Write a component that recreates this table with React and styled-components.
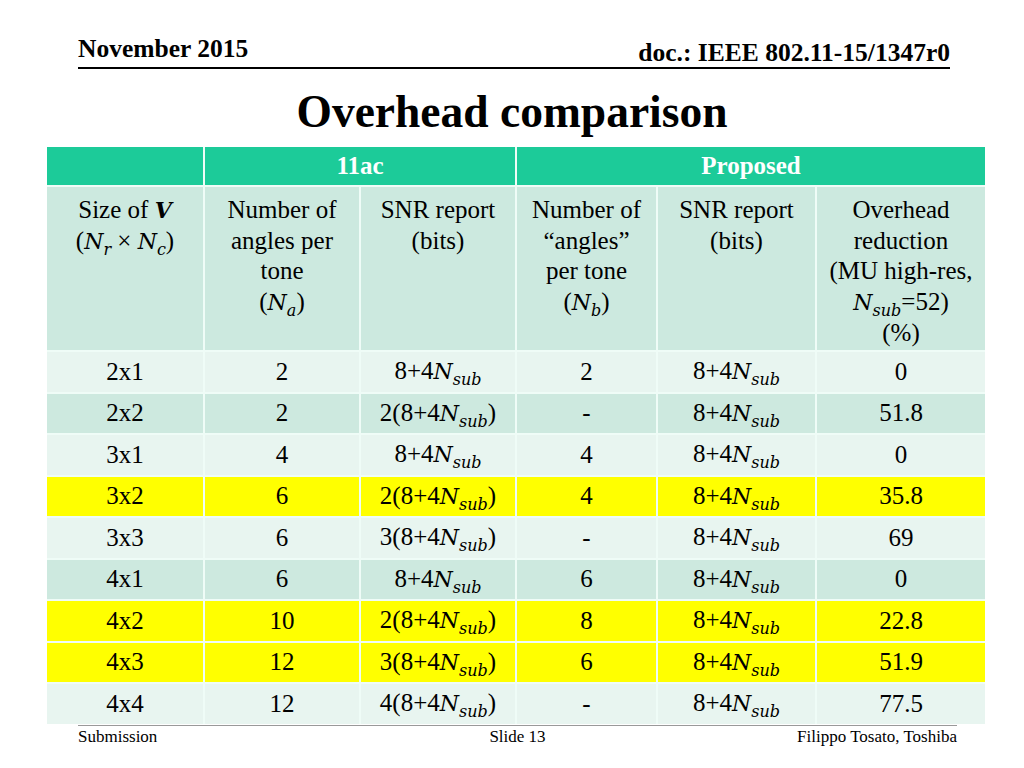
import React from 'react';
import styled, { createGlobalStyle } from 'styled-components';

const serif = `"Liberation Serif", "Times New Roman", serif`;

const GlobalStyle = createGlobalStyle`
  html, body {
    margin: 0;
    padding: 0;
    background: #fff;
  }
  body {
    font-family: ${serif};
    color: #000;
  }
`;

const Slide = styled.div`
  width: 1024px;
  height: 768px;
  display: flex;
  flex-direction: column;
  overflow: hidden;
`;

const TopBar = styled.div`
  margin: 36px 74px 0 78px;
  display: flex;
  justify-content: space-between;
  align-items: flex-end;
  border-bottom: 2px solid #000;
  font-weight: bold;
  font-size: 25.5px;
  line-height: 1;
`;

const TopText = styled.div`
  padding-bottom: ${p => p.$lift}px;
`;

const Title = styled.h1`
  margin: 20px 0 0;
  text-align: center;
  font-size: 45.5px;
  font-weight: bold;
  line-height: 1;
`;

const Table = styled.div`
  margin: 13px 0 0 47px;
  width: 938px;
  display: grid;
  grid-template-columns: 156px 154px 154px 139px 157px 168px;
  grid-template-rows: 38px 163px repeat(9, 39.5px);
  gap: 2px;
  background: #effcf7;
  font-size: 25px;
  line-height: 30.5px;
`;

const tones = {
  head: '#1ccb99',
  sub: '#cce9df',
  light: '#e8f5f0',
  mid: '#cde9df',
  yellow: '#ffff00',
};

const Cell = styled.div`
  grid-column: span ${p => p.$span || 1};
  background: ${p => tones[p.$tone]};
  color: ${p => (p.$tone === 'head' ? '#fff' : '#000')};
  font-weight: ${p => (p.$tone === 'head' ? 'bold' : 'normal')};
  display: flex;
  flex-direction: column;
  align-items: center;
  justify-content: ${p => (p.$top ? 'flex-start' : 'center')};
  padding-top: ${p => (p.$top ? '8px' : '0')};
  text-align: center;
  white-space: nowrap;
`;

const V = styled.i`
  font-family: "DejaVu Serif", serif;
  font-style: italic;
  font-size: 22px;
`;

const BoldV = styled(V)`
  font-weight: bold;
`;

const Sub = styled.span`
  font-family: "DejaVu Serif", serif;
  font-style: italic;
  font-size: 16px;
  line-height: 0;
  vertical-align: -6px;
`;

const Footer = styled.div`
  margin: 1px 67px 0 78px;
  border-top: 1px solid #999;
  display: grid;
  grid-template-columns: 1fr auto 1fr;
  font-size: 17px;
  line-height: 20px;
  padding-top: 1px;
`;

const FootCell = styled.div`
  text-align: ${p => p.$align};
`;

const Var = ({ n, s }) => (
  <>
    <V>{n}</V>
    <Sub>{s}</Sub>
  </>
);

const Report = ({ k }) => (
  <span>
    {k ? `${k}(` : ''}8+4<Var n="N" s="sub" />{k ? ')' : ''}
  </span>
);

const rows = [
  ['2x1', '2', 0, '2', '0', 'light'],
  ['2x2', '2', 2, '-', '51.8', 'mid'],
  ['3x1', '4', 0, '4', '0', 'light'],
  ['3x2', '6', 2, '4', '35.8', 'yellow'],
  ['3x3', '6', 3, '-', '69', 'light'],
  ['4x1', '6', 0, '6', '0', 'mid'],
  ['4x2', '10', 2, '8', '22.8', 'yellow'],
  ['4x3', '12', 3, '6', '51.9', 'yellow'],
  ['4x4', '12', 4, '-', '77.5', 'light'],
];

export default function App() {
  return (
    <Slide>
      <GlobalStyle />
      <TopBar>
        <TopText $lift={5}>November 2015</TopText>
        <TopText $lift={1}>doc.: IEEE 802.11-15/1347r0</TopText>
      </TopBar>
      <Title>Overhead comparison</Title>
      <Table>
        <Cell $tone="head" />
        <Cell $tone="head" $span={2}>11ac</Cell>
        <Cell $tone="head" $span={3}>Proposed</Cell>

        <Cell $tone="sub" $top>
          <div>Size of <BoldV>V</BoldV></div>
          <div>(<Var n="N" s="r" /> × <Var n="N" s="c" />)</div>
        </Cell>
        <Cell $tone="sub" $top>
          <div>Number of</div>
          <div>angles per</div>
          <div>tone</div>
          <div>(<Var n="N" s="a" />)</div>
        </Cell>
        <Cell $tone="sub" $top>
          <div>SNR report</div>
          <div>(bits)</div>
        </Cell>
        <Cell $tone="sub" $top>
          <div>Number of</div>
          <div>“angles”</div>
          <div>per tone</div>
          <div>(<Var n="N" s="b" />)</div>
        </Cell>
        <Cell $tone="sub" $top>
          <div>SNR report</div>
          <div>(bits)</div>
        </Cell>
        <Cell $tone="sub" $top>
          <div>Overhead</div>
          <div>reduction</div>
          <div>(MU high-res,</div>
          <div><Var n="N" s="sub" />=52)</div>
          <div>(%)</div>
        </Cell>

        {rows.map(([size, na, k, nb, red, tone]) => (
          <React.Fragment key={size}>
            <Cell $tone={tone}>{size}</Cell>
            <Cell $tone={tone}>{na}</Cell>
            <Cell $tone={tone}><Report k={k} /></Cell>
            <Cell $tone={tone}>{nb}</Cell>
            <Cell $tone={tone}><Report k={0} /></Cell>
            <Cell $tone={tone}>{red}</Cell>
          </React.Fragment>
        ))}
      </Table>
      <Footer>
        <FootCell $align="left">Submission</FootCell>
        <FootCell $align="center">Slide 13</FootCell>
        <FootCell $align="right">Filippo Tosato, Toshiba</FootCell>
      </Footer>
    </Slide>
  );
}
